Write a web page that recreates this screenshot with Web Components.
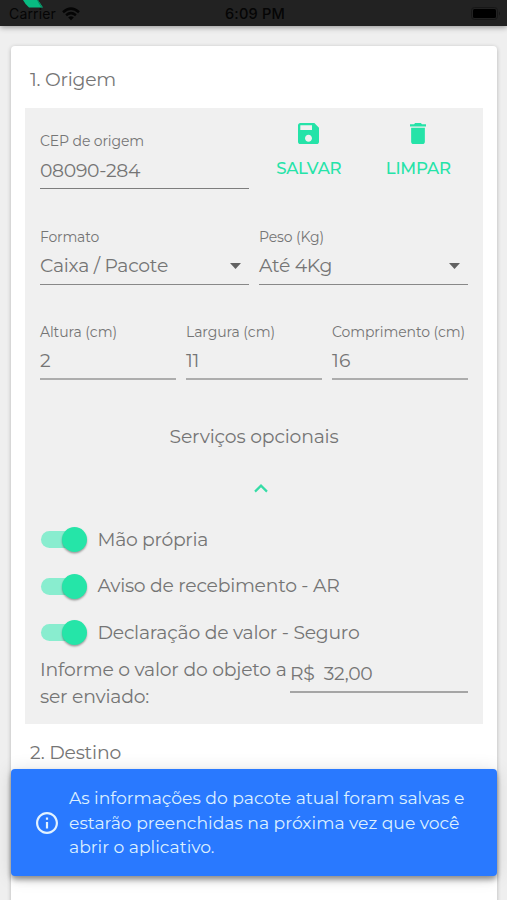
<!DOCTYPE html>
<html lang="pt-BR">
<head>
<meta charset="utf-8">
<title>Origem</title>
<style>
html,body{margin:0;height:900px;overflow:hidden;background:#efefef}
body{font-family:Montserrat,Inter,"Liberation Sans",sans-serif;color:#757575}
</style>
</head>
<body>
<shipping-app></shipping-app>
<script>
const define=(name,html,ready)=>customElements.define(name,class extends HTMLElement{
  connectedCallback(){
    if(this.shadowRoot)return;
    this.attachShadow({mode:'open'}).innerHTML=html(this);
    if(ready)ready(this);
  }
});

/* One line of text, tracked so that it spans the width in its "w" attribute. */
define('ui-text',e=>`<style>
:host{display:block;white-space:pre;font-size:${e.getAttribute('size')||18.8}px;line-height:${e.getAttribute('lh')||26}px;height:${e.getAttribute('lh')||26}px;width:max-content}
span{display:inline-block}</style><span><slot></slot></span>`,e=>{
  const s=e.shadowRoot.querySelector('span'),w=+e.getAttribute('w');
  if(w)s.style.letterSpacing=(w-s.getBoundingClientRect().width)/(e.textContent.length)+'px';
});

define('status-bar',()=>`<style>
:host{display:grid;grid-template-columns:1fr auto 1fr;align-items:center;height:26px;box-sizing:border-box;padding:1px 6px 0 9px;background:#222;color:#050505;position:relative;z-index:2;box-shadow:0 1px 6px rgba(0,0,0,.42);overflow:visible;font-family:Inter,sans-serif}
.l{display:flex;align-items:center;gap:6px}.r{justify-self:end;display:flex}
.leaf{position:absolute;left:22px;top:0}</style>
<svg class="leaf" width="22" height="8" viewBox="0 0 22 8"><path d="M1 0H16L21 7.5H7Q3 4 1 0Z" fill="#08bb81"/><path d="M15 0H16L20 7H19Z" fill="#087e5a"/></svg>
<div class="l"><ui-text size="14" lh="20" w="47">Carrier</ui-text>
<svg width="18" height="14" viewBox="0 0 18 14" fill="none" stroke="#050505" stroke-width="2.5"><path d="M1 5.2Q9-2 17 5.2M4.1 8.2Q9 4 13.9 8.2"/><path d="M6.2 10.4Q9 8.2 11.8 10.4L9 13.2Z" fill="#050505" stroke="none"/></svg></div>
<ui-text size="14.6" lh="20" w="60" style="font-weight:500">6:09 PM</ui-text>
<div class="r"><svg width="30" height="13" viewBox="0 0 30 13"><rect x=".5" y=".5" width="26" height="12" rx="3" fill="none" stroke="#171717"/><rect x="2" y="2" width="23" height="9" rx="1.5" fill="#000"/><path d="M28 4.5Q30 6.5 28 8.5Z" fill="#151515"/></svg></div>`);

define('ui-field',e=>`<style>
:host{display:block;flex:1;min-width:0;height:56px}
.v{display:flex;justify-content:space-between;align-items:center;height:36px;margin-top:3px;border-bottom:${e.getAttribute('line')||'1.4px solid #888'};box-sizing:border-box;padding-right:8px}
svg{display:block;margin-top:-1px}</style>
<ui-text size="14" lh="18" w="${e.getAttribute('lw')}">${e.getAttribute('label')}</ui-text>
<div class="v"><slot></slot>${e.hasAttribute('select')?'<svg width="11" height="6"><path d="M0 0H11L5.5 6Z" fill="#626262"/></svg>':''}</div>`);

define('icon-button',()=>`<style>
:host{display:flex;flex:1;flex-direction:column;align-items:center;color:#25e3a8;gap:11px;margin-top:-9px}</style>
<slot name="icon"></slot><slot></slot>`);

define('ui-switch',()=>`<style>
:host{display:flex;align-items:center;gap:10.5px;height:46.5px}
.t{width:46px;height:26px;display:grid;align-items:center;margin-left:1px}
.t>*{grid-area:1/1}
.bar{width:42px;height:17px;border-radius:9px;background:#89edcf}
.knob{width:25px;height:25px;border-radius:50%;background:#25e5a8;justify-self:end;box-shadow:0 1.5px 2px rgba(0,0,0,.34)}</style>
<div class="t"><div class="bar"></div><div class="knob"></div></div><slot></slot>`);

define('info-snackbar',()=>`<style>
:host{position:absolute;left:11px;top:769px;width:486px;height:107px;box-sizing:border-box;border-radius:4px;background:#2979ff;color:#dcf0ff;display:flex;align-items:center;gap:11px;padding:1px 0 0 25px;box-shadow:0 3px 5px rgba(0,0,0,.32),0 7px 7px -2px rgba(0,0,0,.14),0 1px 18px rgba(0,0,0,.12)}
svg{flex:none}</style>
<svg width="22" height="22" viewBox="2 2 20 20" fill="#e2f2ff"><path d="M11 7h2v2h-2zm0 4h2v6h-2zm1-9C6.48 2 2 6.48 2 12s4.48 10 10 10 10-4.48 10-10S17.52 2 12 2zm0 18c-4.41 0-8-3.59-8-8s3.59-8 8-8 8 3.59 8 8-3.59 8-8 8z"/></svg>
<div><slot></slot></div>`);

define('form-panel',()=>`<style>
:host{display:flex;flex-direction:column;width:458px;height:616px;box-sizing:border-box;margin:0 0 0 14px;padding:24px 15px 0;background:#f0f0f0}
.row{display:flex;gap:10px;height:95.5px;flex:none}
.pair{display:flex;gap:10px;flex:1}
.opt{align-self:center;margin:5px 0 0;display:flex;flex-direction:column;align-items:center;height:93px}
.opt svg{margin:34px 0 0 14px}
.value{display:flex;justify-content:space-between;margin-top:0}
.money{width:178px;height:37px;box-sizing:border-box;border-bottom:2px solid #a5a5a5;padding-top:5px}</style>
<div class="row"><ui-field label="CEP de origem" lw="104" line="1.4px solid #7d7d7d"><ui-text w="100">08090-284</ui-text></ui-field>
<div class="pair"><icon-button><svg slot="icon" width="21" height="21" viewBox="3 3 18 18" fill="currentColor"><path d="M17 3H5c-1.11 0-2 .9-2 2v14c0 1.1.89 2 2 2h14c1.1 0 2-.9 2-2V7l-4-4zm-5 16c-1.66 0-3-1.34-3-3s1.34-3 3-3 3 1.34 3 3-1.34 3-3 3zm3-10H5V5h10v4z"/></svg><ui-text size="16.6" w="65" style="font-weight:500">SALVAR</ui-text></icon-button>
<icon-button><svg slot="icon" width="16" height="21" viewBox="5 3 14 18" preserveAspectRatio="none" fill="currentColor"><path d="M6 19c0 1.1.9 2 2 2h8c1.1 0 2-.9 2-2V7H6v12zM19 4h-3.5l-1-1h-5l-1 1H5v2h14V4z"/></svg><ui-text size="16.6" w="65" style="font-weight:500">LIMPAR</ui-text></icon-button></div></div>
<div class="row"><ui-field select label="Formato" lw="59"><ui-text w="128">Caixa / Pacote</ui-text></ui-field>
<ui-field select label="Peso (Kg)" lw="65"><ui-text w="73">Até 4Kg</ui-text></ui-field></div>
<div class="row"><ui-field label="Altura (cm)" lw="77" line="2px solid #adadad"><ui-text>2</ui-text></ui-field>
<ui-field label="Largura (cm)" lw="89" line="2px solid #adadad"><ui-text w="13">11</ui-text></ui-field>
<ui-field label="Comprimento (cm)" lw="133" line="2px solid #adadad"><ui-text w="18.5">16</ui-text></ui-field></div>
<div class="opt"><ui-text w="169">Serviços opcionais</ui-text><svg width="14" height="9" viewBox="0 0 14 9" fill="none" stroke="#35dca6" stroke-width="2.2"><path d="M1 7.6 7 1.6 13 7.6"/></svg></div>
<ui-switch><ui-text w="110.5">Mão própria</ui-text></ui-switch>
<ui-switch><ui-text w="242">Aviso de recebimento - AR</ui-text></ui-switch>
<ui-switch><ui-text w="262">Declaração de valor - Seguro</ui-text></ui-switch>
<div class="value"><div><ui-text lh="27" w="246.5">Informe o valor do objeto a</ui-text><ui-text lh="27" w="109">ser enviado:</ui-text></div>
<div class="money"><ui-text w="82.5">R$  32,00</ui-text></div></div>`);

define('form-card',()=>`<style>
:host{display:block;width:486px;height:870px;margin:20px 0 0 11px;background:#fff;border-radius:4px;box-shadow:0 1px 4px rgba(0,0,0,.24)}
.h{margin-left:19px;height:62px;box-sizing:border-box;padding-top:21px}
.h+*+.h{padding-top:15.5px}</style>
<div class="h"><ui-text w="86">1. Origem</ui-text></div><form-panel></form-panel>
<div class="h"><ui-text w="91">2. Destino</ui-text></div>`);

define('shipping-app',()=>`<style>:host{display:block;position:relative;width:507px;height:900px;overflow:hidden;background:#efefef}</style>
<status-bar></status-bar><form-card></form-card>
<info-snackbar><ui-text size="17.2" lh="24.5" w="395.5">As informações do pacote atual foram salvas e</ui-text><ui-text size="17.2" lh="24.5" w="390.5">estarão preenchidas na próxima vez que você</ui-text><ui-text size="17.2" lh="24.5" w="145.5">abrir o aplicativo.</ui-text></info-snackbar>`);
</script>
</body>
</html>
